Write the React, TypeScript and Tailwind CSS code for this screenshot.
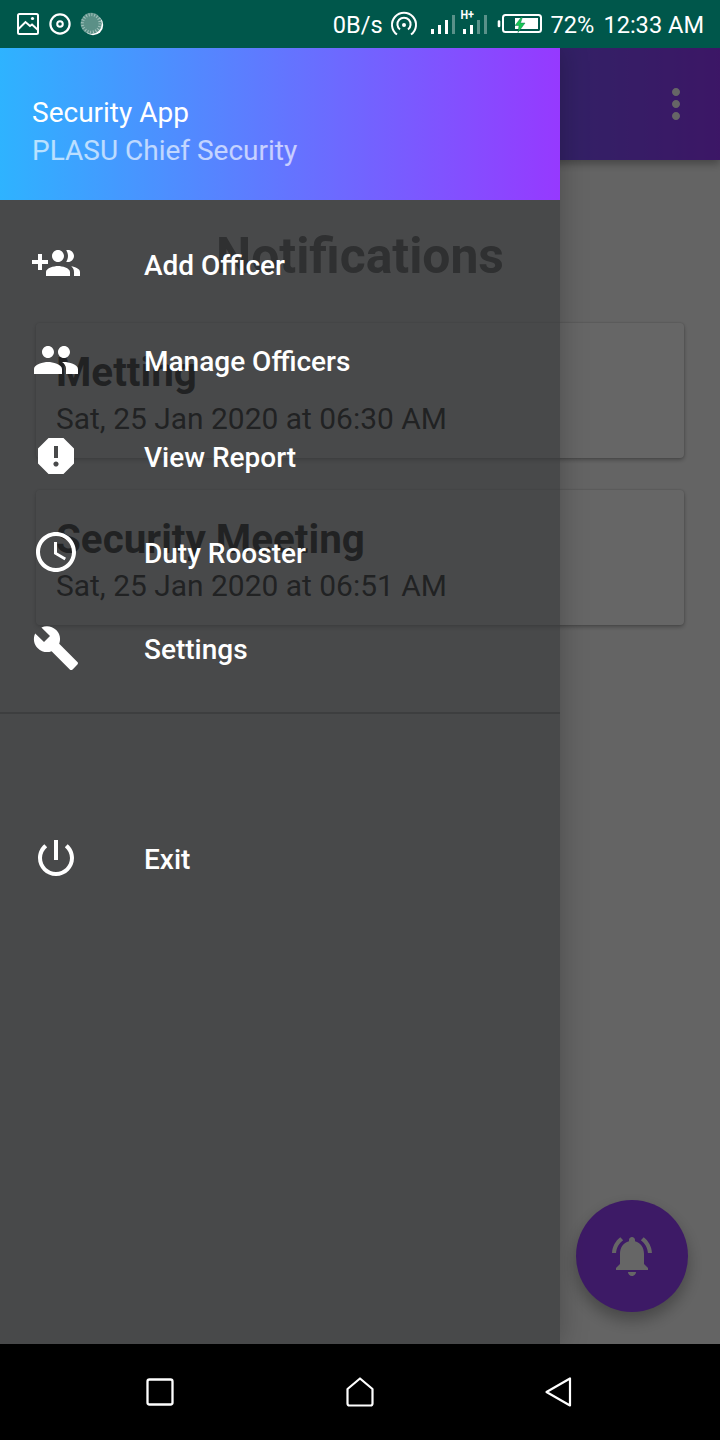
import React from "react";

type IconProps = { d: string; className?: string };

const Icon = ({ d, className = "size-12 shrink-0" }: IconProps) => (
  <svg viewBox="0 0 24 24" fill="currentColor" className={className}>
    <path d={d} />
  </svg>
);

const icons = {
  groupAdd:
    "M8 10H5V7H3v3H0v2h3v3h2v-3h3v-2zm10 1c1.66 0 2.99-1.34 2.99-3S19.66 5 18 5c-.32 0-.63.05-.91.14.57.81.9 1.79.9 2.86s-.34 2.04-.9 2.86c.28.09.59.14.91.14zm-5 0c1.66 0 2.99-1.34 2.99-3S14.66 5 13 5c-1.66 0-3 1.34-3 3s1.34 3 3 3zm6.62 2.16c.83.73 1.38 1.66 1.38 2.84v2h3v-2c0-1.54-2.37-2.49-4.38-2.84zM13 13c-2 0-6 1-6 3v2h12v-2c0-2-4-3-6-3z",
  group:
    "M16 11c1.66 0 2.99-1.34 2.99-3S17.66 5 16 5c-1.66 0-3 1.34-3 3s1.34 3 3 3zm-8 0c1.66 0 2.99-1.34 2.99-3S9.66 5 8 5C6.34 5 5 6.34 5 8s1.34 3 3 3zm0 2c-2.33 0-7 1.17-7 3.5V19h14v-2.5c0-2.33-4.67-3.5-7-3.5zm8 0c-.29 0-.62.02-.97.05 1.16.84 1.97 1.97 1.97 3.45V19h6v-2.5c0-2.33-4.67-3.5-7-3.5z",
  report:
    "M15.73 3H8.27L3 8.27v7.46L8.27 21h7.46L21 15.73V8.27L15.73 3zM12 17.3c-.72 0-1.3-.58-1.3-1.3 0-.72.58-1.3 1.3-1.3.72 0 1.3.58 1.3 1.3 0 .72-.58 1.3-1.3 1.3zm1-4.3h-2V7h2v6z",
  clock:
    "M11.99 2C6.47 2 2 6.48 2 12s4.47 10 9.99 10C17.52 22 22 17.52 22 12S17.52 2 11.99 2zM12 20c-4.42 0-8-3.58-8-8s3.58-8 8-8 8 3.58 8 8-3.58 8-8 8zm.5-13H11v6l5.25 3.15.75-1.23-4.5-2.67z",
  build:
    "M22.7 19l-9.1-9.1c.9-2.3.4-5-1.5-6.9-2-2-5-2.4-7.4-1.3L9 6 6 9 1.6 4.7C.4 7.1.9 10.1 2.9 12.1c1.9 1.9 4.6 2.4 6.9 1.5l9.1 9.1c.4.4 1 .4 1.4 0l2.3-2.3c.5-.4.5-1.1.1-1.4z",
  power:
    "M13 3h-2v10h2V3zm4.83 2.17l-1.42 1.42C17.99 7.86 19 9.81 19 12c0 3.87-3.13 7-7 7s-7-3.13-7-7c0-2.19 1.01-4.14 2.58-5.42L6.17 5.17C4.23 6.82 3 9.26 3 12c0 4.97 4.03 9 9 9s9-4.03 9-9c0-2.74-1.23-5.18-3.17-6.83z",
  bell:
    "M7.58 4.08L6.15 2.65C3.75 4.48 2.17 7.3 2.03 10.5h2c.15-2.65 1.51-4.97 3.55-6.42zm12.39 6.42h2c-.15-3.2-1.73-6.02-4.12-7.85l-1.42 1.43c2.02 1.45 3.39 3.77 3.54 6.42zM18 11c0-3.07-1.64-5.64-4.5-6.32V4c0-.83-.67-1.5-1.5-1.5s-1.5.67-1.5 1.5v.68C7.63 5.36 6 7.92 6 11v5l-2 2v1h16v-1l-2-2v-5zm-6 11c.14 0 .27-.01.4-.04.65-.14 1.18-.58 1.44-1.18.1-.24.15-.5.15-.78h-4c.01 1.1.9 2 2.01 2z",
  more:
    "M12 8c1.1 0 2-.9 2-2s-.9-2-2-2-2 .9-2 2 .9 2 2 2zm0 2c-1.1 0-2 .9-2 2s.9 2 2 2 2-.9 2-2-.9-2-2-2zm0 6c-1.1 0-2 .9-2 2s.9 2 2 2 2-.9 2-2-.9-2-2-2z",
};

const StatusBar = () => (
  <header className="flex h-12 shrink-0 items-center justify-between bg-[#00574b] px-4 text-[23.6px] text-white">
    <svg width="90" height="48" viewBox="16 0 90 48" fill="none" stroke="white" strokeWidth="2">
      <rect x="18" y="14" width="20" height="20" rx="1.5" />
      <path d="M18 29.5l7.5-7.5 4.5 4 2-1.5 6 5.5" />
      <circle cx="32.5" cy="18.5" r="1.6" fill="white" stroke="none" />
      <circle cx="60" cy="24" r="9.6" strokeWidth="2.2" />
      <circle cx="60" cy="24" r="2.8" />
      <circle cx="93" cy="25" r="10.2" fill="white" stroke="none" />
      <circle cx="91.2" cy="23.4" r="10.6" fill="#5b9087" stroke="none" />
      <circle cx="91.2" cy="23.4" r="8.8" stroke="#a3c2bd" strokeWidth="3" strokeDasharray="1 1.76" />
    </svg>
    <div className="flex items-center">
      <span className="pt-[3px]">0B/s</span>
      <svg width="168" height="48" viewBox="383 0 168 48" fill="none" stroke="white" strokeWidth="2">
        <path d="M397 34.5a12 12 0 1 1 14 0" />
        <path d="M400 29.5a6.6 6.6 0 1 1 8 0" />
        <circle cx="404" cy="25" r="2" fill="white" stroke="none" />
        <g fill="white" stroke="none">
          <rect x="431" y="29" width="3" height="5" />
          <rect x="438" y="25" width="3" height="9" />
          <rect x="445" y="20" width="3" height="14" />
          <rect x="452" y="15" width="3" height="19" opacity=".35" />
          <rect x="463" y="29" width="3" height="5" />
          <rect x="470" y="25" width="3" height="9" />
          <rect x="477" y="20" width="3" height="14" opacity=".35" />
          <rect x="484" y="15" width="3" height="19" opacity=".35" />
        </g>
        <text x="460.500" y="19" textLength="13.500" lengthAdjust="spacingAndGlyphs" fill="white" stroke="none" className="text-[12px] font-bold">H+</text>
        <path d="M499 21.500v4.500" strokeWidth="2.600" strokeLinecap="round" />
        <rect x="503" y="15" width="38" height="17" rx="2.500" />
        <rect x="515" y="18" width="23" height="11" fill="white" stroke="none" />
        <path d="M521.500 17l-6.500 8.500h4l-1 7 7-9.500h-4.500l2-6z" fill="#18c653" stroke="#00574b" strokeWidth=".4" />
      </svg>
      <span className="pt-[3px]">72%</span>
      <span className="ml-[9px] pt-[3px]">12:33 AM</span>
    </div>
  </header>
);

const NotificationCard = ({ title, date }: { title: string; date: string }) => (
  <article className="h-[135px] rounded-[4px] bg-white px-5 pt-[26px] text-black shadow-[0_2px_4px_rgba(0,0,0,0.28),0_0_2px_rgba(0,0,0,0.2)]">
    <h2 className="text-[40.4px] leading-[48px] font-bold">{title}</h2>
    <p className="mt-1 text-[29.95px] leading-9">{date}</p>
  </article>
);

const NavItem = ({ icon, label }: { icon: string; label: string }) => (
  <li className="flex h-24 items-center gap-16 px-8">
    <Icon d={icon} />
    <span className="pt-[3px] text-[28px] leading-8 font-medium">{label}</span>
  </li>
);

const Drawer = () => (
  <aside className="absolute inset-y-0 left-0 flex w-[560px] flex-col bg-[#363839]/61 text-white shadow-[0_0_26px_rgba(0,0,0,0.25)]">
    <div className="flex h-[152px] flex-col bg-linear-to-r/srgb from-[#2eb3ff] to-[#9639ff] px-8 pt-[46px] text-[28px] leading-[38px]">
      <p>Security App</p>
      <p className="text-white/65">PLASU Chief Security</p>
    </div>
    <ul className="border-b-2 border-[#3d3e3f] py-4">
      <NavItem icon={icons.groupAdd} label="Add Officer" />
      <NavItem icon={icons.group} label="Manage Officers" />
      <NavItem icon={icons.report} label="View Report" />
      <NavItem icon={icons.clock} label="Duty Rooster" />
      <NavItem icon={icons.build} label="Settings" />
    </ul>
    <ul className="pt-24">
      <NavItem icon={icons.power} label="Exit" />
    </ul>
  </aside>
);

const Main = () => (
  <main className="flex h-full flex-col bg-[#fafafa]">
    <div className="flex h-28 shrink-0 items-center justify-end bg-linear-to-r/srgb from-[#2eb3ff] to-[#9639ff] pr-5 text-white shadow-[0_4px_8px_rgba(0,0,0,0.3)]">
      <Icon d={icons.more} />
    </div>
    <h1 className="mt-[66px] text-center text-[49.8px] leading-[60px] font-bold text-[#5a5a5a]">Notifications</h1>
    <div className="mt-[37px] flex flex-col gap-8 px-9">
      <NotificationCard title="Metting" date="Sat, 25 Jan 2020 at 06:30 AM" />
      <NotificationCard title="Security Meeting" date="Sat, 25 Jan 2020 at 06:51 AM" />
    </div>
    <button className="absolute right-8 bottom-8 flex size-28 items-center justify-center rounded-full bg-[#9941ff] text-white shadow-[0_8px_16px_rgba(0,0,0,0.3)]">
      <Icon d={icons.bell} />
    </button>
  </main>
);

const NavigationBar = () => (
  <footer className="flex h-24 shrink-0 items-center justify-center gap-40 bg-black">
    <svg width="40" height="40" viewBox="0 0 40 40" fill="none" stroke="white" strokeWidth="2.300">
      <rect x="7.500" y="7.500" width="25" height="25" rx="2" />
    </svg>
    <svg width="40" height="40" viewBox="0 0 40 40" fill="none" stroke="white" strokeWidth="2.200" strokeLinejoin="round">
      <path d="M20 6.500l12.500 10.500v14.500q0 2-2 2h-21q-2 0-2-2v-14.500z" />
    </svg>
    <svg width="40" height="40" viewBox="0 0 40 40" fill="none" stroke="white" strokeWidth="2.200" strokeLinejoin="round">
      <path d="M30 6.500v27L6.500 20z" />
    </svg>
  </footer>
);

export default function App() {
  return (
    <div className="flex h-[1440px] w-[720px] flex-col overflow-hidden font-[Roboto,sans-serif]">
      <StatusBar />
      <div className="relative min-h-0 flex-1 overflow-hidden">
        <Main />
        <div className="absolute inset-0 bg-black/60" />
        <Drawer />
      </div>
      <NavigationBar />
    </div>
  );
}
